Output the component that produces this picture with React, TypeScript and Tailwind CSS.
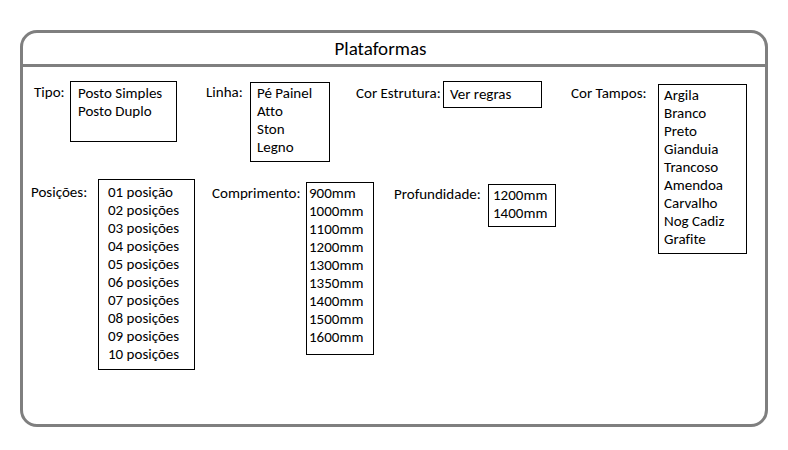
type FieldProps = {
  id: string;
  label: string;
  options: string[];
  className?: string;
  labelClass: string;
  boxClass: string;
};

function ListField({ id, label, options, className = "", labelClass, boxClass }: FieldProps) {
  return (
    <div className={`flex shrink-0 items-start ${className}`}>
      <label htmlFor={id} className={`shrink-0 whitespace-nowrap ${labelClass}`}>
        {label}
      </label>
      <select
        id={id}
        multiple
        size={options.length}
        className={`block appearance-none overflow-hidden rounded-none border border-black bg-white text-black outline-none [font-variant-ligatures:none] ${boxClass}`}
      >
        {options.map((option) => (
          <option key={option} className="h-[18px] min-h-0 p-0 leading-[18px] [font-variant-ligatures:none]">
            {option}
          </option>
        ))}
      </select>
    </div>
  );
}

const positions = [
  "01 posição",
  "02 posições",
  "03 posições",
  "04 posições",
  "05 posições",
  "06 posições",
  "07 posições",
  "08 posições",
  "09 posições",
  "10 posições",
];

const lengths = [
  "900mm",
  "1000mm",
  "1100mm",
  "1200mm",
  "1300mm",
  "1350mm",
  "1400mm",
  "1500mm",
  "1600mm",
];

const tops = [
  "Argila",
  "Branco",
  "Preto",
  "Gianduia",
  "Trancoso",
  "Amendoa",
  "Carvalho",
  "Nog Cadiz",
  "Grafite",
];

export default function App() {
  return (
    <main className="bg-white px-5 pt-[30px] pb-6 font-[Carlito,Calibri,Lato,sans-serif] text-[15px] leading-[18px] text-black">
      <section className="rounded-[17px] border-3 border-[#7f7f7f]">
        <header className="border-b-3 border-[#7f7f7f] pr-[27px] pt-1 pb-[3px] text-center">
          <h1 className="text-[19px] leading-6">Plataformas</h1>
        </header>
        <form className="flex items-start justify-between pt-[14px] pr-[18px] pb-[54px] pl-2">
          <div className="flex flex-col gap-[17px]">
            <div className="flex items-start pl-[3px]">
              <ListField
                id="tipo"
                label="Tipo:"
                options={["Posto Simples", "Posto Duplo"]}
                labelClass="w-9 pt-[2px]"
                boxClass="h-[61px] w-[107px] pt-[2px] pl-[7px]"
              />
              <ListField
                id="linha"
                label="Linha:"
                options={["Pé Painel", "Atto", "Ston", "Legno"]}
                className="mt-px ml-[29px]"
                labelClass="w-11 pt-px"
                boxClass="h-[80px] w-[80px] pt-px pl-[6px]"
              />
              <ListField
                id="cor-estrutura"
                label="Cor Estrutura:"
                options={["Ver regras"]}
                className="ml-[26px]"
                labelClass="w-[87px] pt-[3px]"
                boxClass="h-[27px] w-[99px] pt-[3px] pl-[6px]"
              />
            </div>
            <div className="flex items-start">
              <ListField
                id="posicoes"
                label="Posições:"
                options={positions}
                labelClass="w-[67px] pt-[4px]"
                boxClass="h-[191px] w-[97px] pt-[3px] pl-[9px]"
              />
              <ListField
                id="comprimento"
                label="Comprimento:"
                options={lengths}
                className="mt-[3px] ml-[17px]"
                labelClass="w-[94px] pt-[2px]"
                boxClass="h-[173px] w-[68px] pt-px pl-[2px]"
              />
              <ListField
                id="profundidade"
                label="Profundidade:"
                options={["1200mm", "1400mm"]}
                className="mt-[5px] ml-5"
                labelClass="w-[94px] pt-px"
                boxClass="h-[43px] w-[68px] pt-px pl-1"
              />
            </div>
          </div>
          <ListField
            id="cor-tampos"
            label="Cor Tampos:"
            options={tops}
            className="mt-[3px]"
            labelClass="w-[87px]"
            boxClass="h-[170px] w-[89px] pt-px pl-[5px]"
          />
        </form>
      </section>
    </main>
  );
}
